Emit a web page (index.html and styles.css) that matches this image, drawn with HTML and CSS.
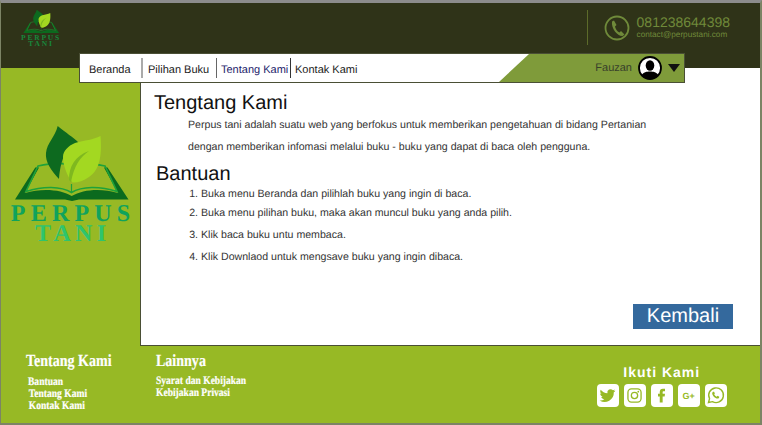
FILE: index.html
```html
<!DOCTYPE html>
<html lang="id">
<head>
<meta charset="utf-8">
<title>Perpus Tani</title>
<link rel="stylesheet" href="styles.css">
</head>
<body>
<svg class="defs" width="0" height="0" aria-hidden="true">
  <symbol id="mark" viewBox="0 14 140 78">
    <path fill="#0b6a1e" d="M14 89.5 34.3 57.5 38 57.5 24 83C40 78 60 79 70.700 86 82 79 101 78 117 83L103 57.500 106.500 57.500 127.500 89.500 78 89.500 71 91 64 89.500Z"/>
    <path fill="none" stroke="#1fa23a" stroke-width="1.600" d="M37 56 25 81.500C42 76 60 76 70.500 82.500 81 76 99 76 116 81.500L104 56C90 53 80 52 70.500 55 60 52 50 53 37 56Z"/>
    <path fill="none" stroke="#1fa23a" stroke-width="1.200" d="M70.500 74V82"/>
    <path fill="#0d6a1f" d="M56.700 16C65 23 72 27 78 33 66 37 60 46 58 69 50 60 44 52 45 43 46 33 54 27 56.700 16Z"/>
    <path fill="#a3d821" d="M99.500 26C101 45 99 60 88 67 82 71 76 73 71.500 72.500 66 66 62 55 62 47 62 41 67 36 74 33 84 30 92 30 99.500 26Z"/>
    <path fill="#7fb81f" d="M68 70C68 56 74 46 88 41 79 47 73 56 70 72Z"/>
  </symbol>
</svg>
<div class="frame">
  <header class="top">
    <div class="top-row">
      <div class="brand-small">
        <svg class="brand-small-mark"><use href="#mark"/></svg>
        <span class="brand-small-a">PERPUS</span>
        <span class="brand-small-b">TANI</span>
      </div>
      <div class="contact">
        <svg class="phone" viewBox="0 0 26 26">
          <circle cx="13" cy="13" r="11.500" fill="none" stroke="#6f8a3a" stroke-width="1.800"/>
          <path fill="#6f8a3a" d="M8 6.500 10 5.500 12.500 10 11 11.500C11.500 14 13 16.500 15.500 17.500L17 16 20.500 19.500 18.500 21C14 21.500 7 14 8 6.500Z"/>
        </svg>
        <div class="contact-text">
          <div class="contact-num">081238644398</div>
          <div class="contact-mail">contact@perpustani.com</div>
        </div>
      </div>
    </div>
    <nav class="nav">
      <a class="nav-item nav-first">Beranda</a>
      <a class="nav-item nav-second">Pilihan Buku</a>
      <a class="nav-item nav-active">Tentang Kami</a>
      <a class="nav-item nav-last">Kontak Kami</a>
      <div class="user">
        <span class="user-name">Fauzan</span>
        <svg class="avatar" viewBox="0 0 24 24">
          <circle cx="12" cy="12" r="11" fill="#fff" stroke="#000" stroke-width="1.800"/>
          <ellipse cx="12" cy="9.500" rx="4.300" ry="5.200"/>
          <path d="M3.500 19.500C5 16 9 15.500 12 15.500 15 15.500 19 16 20.500 19.500 18 22 15 23 12 23 9 23 6 22 3.500 19.500Z"/>
        </svg>
        <span class="caret"></span>
      </div>
    </nav>
  </header>
  <div class="middle">
    <aside class="side">
      <svg class="side-mark"><use href="#mark"/></svg>
      <div class="side-a">PERPUS</div>
      <div class="side-b">TANI</div>
    </aside>
    <main class="content">
      <h1 class="title">Tengtang Kami</h1>
      <p class="para">Perpus tani adalah suatu web yang berfokus untuk memberikan pengetahuan di bidang Pertanian</p>
      <p class="para">dengan memberikan infomasi melalui buku - buku yang dapat di baca oleh pengguna.</p>
      <h2 class="title title-b">Bantuan</h2>
      <ol class="steps">
        <li>Buka menu Beranda dan pilihlah buku yang ingin di baca.</li>
        <li>Buka menu pilihan buku, maka akan muncul buku yang anda pilih.</li>
        <li>Klik baca buku untu membaca.</li>
        <li>Klik Downlaod untuk mengsave buku yang ingin dibaca.</li>
      </ol>
      <div class="actions"><a class="back">Kembali</a></div>
    </main>
  </div>
  <footer class="foot">
    <div class="foot-col foot-col-a">
      <h3 class="foot-title">Tentang Kami</h3>
      <ul class="foot-list">
        <li>Bantuan</li>
        <li class="shift">Tentang Kami</li>
        <li class="shift">Kontak Kami</li>
      </ul>
    </div>
    <div class="foot-col foot-col-b">
      <h3 class="foot-title">Lainnya</h3>
      <ul class="foot-list foot-list-b">
        <li>Syarat dan Kebijakan</li>
        <li>Kebijakan Privasi</li>
      </ul>
    </div>
    <div class="follow">
      <div class="follow-title">Ikuti Kami</div>
      <div class="icons">
        <span class="ico"><svg viewBox="0 0 24 24"><path d="M21 6.500c-.7.3-1.400.5-2.100.6.8-.5 1.300-1.200 1.600-2-.7.4-1.500.7-2.300.9a3.700 3.700 0 0 0-6.300 3.400C8.800 9.200 6 7.700 4.200 5.400c-1 1.700-.5 3.800 1.100 4.900-.6 0-1.200-.2-1.700-.5 0 1.800 1.300 3.300 3 3.700-.5.100-1.100.2-1.700.1.500 1.500 1.900 2.500 3.500 2.600A7.500 7.500 0 0 1 3 17.700 10.500 10.500 0 0 0 19.200 8.400c.7-.5 1.300-1.100 1.800-1.900Z"/></svg></span>
        <span class="ico"><svg viewBox="0 0 24 24"><rect x="4.500" y="4.500" width="15" height="15" rx="4" fill="none" stroke="#97b925" stroke-width="1.500"/><circle cx="12" cy="12" r="3.600" fill="none" stroke="#97b925" stroke-width="1.500"/><circle cx="16.300" cy="7.700" r="1"/></svg></span>
        <span class="ico"><svg viewBox="0 0 24 24"><path d="M10 20v-7H8v-3h2V8c0-2.500 1.300-3.800 3.500-3.800H16v3h-1.500c-.9 0-1.200.4-1.200 1.200V10H16l-.4 3h-2.300v7Z"/></svg></span>
        <span class="ico ico-text">G+</span>
        <span class="ico"><svg viewBox="0 0 24 24"><path fill="none" stroke="#97b925" stroke-width="1.600" d="M4 20l1.200-4.400A8.400 8.400 0 1 1 8.500 19Z"/><path d="M9.200 7.700c-.9.600-1.200 1.800-.7 3.100.8 2 2.600 3.800 4.700 4.600 1.200.4 2.300 0 2.900-.9l.2-1.100-2-1-.9 1c-1.300-.5-2.300-1.500-2.900-2.800l.8-.9-.9-2.100Z"/></svg></span>
      </div>
    </div>
  </footer>
</div>
</body>
</html>
```
FILE: styles.css
```css
* { box-sizing: border-box; }
html, body { margin: 0; padding: 0; background: #fff; }
body { font-family: "Liberation Sans", Arial, sans-serif; color: #1a1a1a; text-rendering: geometricPrecision; }
.defs { position: absolute; }

.frame {
  width: 762px;
  height: 425px;
  display: flex;
  flex-direction: column;
  border-top: 3px solid #8c8c8c;
  border-left: 1px solid #7c8465;
  border-right: 2px solid #7c8465;
  border-bottom: 2px solid #7c8465;
  background: #fff;
}

.top {
  height: 65px;
  flex: none;
  background: #2f3318;
  position: relative;
  z-index: 2;
}
.top-row { height: 50px; display: flex; justify-content: space-between; }
.brand-small { width: 44px; margin: 6px 0 0 18px; display: flex; flex-direction: column; align-items: center; }
.brand-small-mark { width: 44px; height: 25px; flex: none; }
.brand-small-a, .brand-small-b {
  font-family: "Liberation Serif", serif;
  font-weight: 700;
  font-size: 7.500px;
  line-height: 6px;
  letter-spacing: 1.800px;
  color: #17883c;
}
.brand-small-a { margin-top: 1px; }
.contact { display: flex; align-items: flex-start; margin: 7px 30px 0 0; padding-left: 16px; height: 35px; border-left: 1px solid #5c6b2a; }
.phone { width: 26px; height: 26px; margin: 5px 7px 0 0; }
.contact-text { padding-top: 5px; }
.contact-num { font-size: 14px; line-height: 15px; color: #6f8a3a; }
.contact-mail { font-size: 8.200px; line-height: 10px; color: #6f8a3a; }

.nav {
  width: 606px;
  height: 30px;
  margin-left: 78px;
  display: flex;
  align-items: center;
  background: #fff;
  border: 1px solid #4a4f35;
  font-size: 11px;
  color: #222;
}
.nav-item { display: block; height: 20px; line-height: 24px; white-space: nowrap; }
.nav-first { padding-left: 9px; width: 61px; }
.nav-second { padding-left: 5px; width: 75px; border-left: 2px solid #aaa; }
.nav-active { padding-left: 4px; width: 74px; border-left: 1px solid #666; color: #23236b; }
.nav-last { padding-left: 4px; border-left: 1px solid #333; }
.user {
  margin-left: auto;
  width: 185px;
  height: 28px;
  display: flex;
  align-items: center;
  justify-content: flex-end;
  gap: 6px;
  padding-right: 4px;
  background: #7f9b3a;
  clip-path: polygon(30px 0, 100% 0, 100% 100%, 0 100%);
}
.user-name { font-size: 11px; color: #38402a; }
.avatar { width: 24px; height: 24px; }
.caret { width: 0; height: 0; border-left: 6px solid transparent; border-right: 6px solid transparent; border-top: 8px solid #111; }

.middle { flex: 1; min-height: 0; display: flex; }
.side {
  width: 140px;
  flex: none;
  background: #97b925;
  border-right: 1px solid #4a4f35;
  display: flex;
  flex-direction: column;
  align-items: center;
  padding-top: 56px;
  font-family: "Liberation Serif", serif;
  font-weight: 700;
}
.side-mark { width: 140px; height: 78px; flex: none; }
.side-a { font-size: 24px; line-height: 20px; letter-spacing: 5.200px; margin-right: -5.200px; color: #10a35c; margin-top: 2px; }
.side-b { font-size: 24px; line-height: 20px; letter-spacing: 4.300px; margin-right: -4.300px; color: #2fc46d; }

.content { flex: 1; min-width: 0; display: flex; flex-direction: column; padding: 23px 0 0 13px; border-bottom: 1px solid #4a4f35; }
.title { margin: 0; font-size: 20px; line-height: 24px; font-weight: 400; color: #111; }
.title + .para { margin-top: -1px; }
.title-b { margin: 4px 0 0 2px; }
.para { margin: 0 0 0 34px; font-size: 10.600px; line-height: 22px; color: #333; }
.steps { margin: 0 0 0 47px; padding: 0; font-size: 10.600px; color: #333; }
.steps li { line-height: 22px; }
.steps li:first-child { line-height: 16px; }
.actions { margin-top: auto; display: flex; justify-content: flex-end; padding: 0 27px 16px 0; }
.back { width: 100px; height: 25px; background: #34699d; color: #fff; font-size: 20px; line-height: 25px; text-align: center; }

.foot { flex: none; height: 77px; display: flex; background: #97b925; color: #fff; }
.foot-col { font-family: "Liberation Serif", serif; font-weight: 700; padding-top: 6px; }
.foot-col-a { margin-left: 25px; width: 130px; }
.foot-title { margin: 0; font-size: 17px; line-height: 17px; font-weight: 700; transform: scaleX(.825); transform-origin: left; white-space: nowrap; -webkit-text-stroke: .2px #fff; }
.foot-list { margin: 7px 0 0 2px; padding: 0; list-style: none; font-size: 11.500px; line-height: 12px; transform: scaleX(.83); transform-origin: left; white-space: nowrap; -webkit-text-stroke: .2px #fff; }
.foot-list-b { margin-left: 0; margin-top: 6px; }
.shift { margin-left: 1px; }
.follow { margin-left: auto; margin-right: 33px; padding-top: 18px; }
.follow-title { text-align: center; font-size: 14px; line-height: 16px; font-weight: 700; letter-spacing: 1px; color: #fff; }
.icons { display: flex; gap: 4.500px; margin-top: 4px; }
.ico { width: 22.500px; height: 23px; border-radius: 4px; background: #fff; color: #97b925; display: flex; align-items: center; justify-content: center; }
.ico svg { width: 21px; height: 21px; fill: #97b925; }
.ico-text { font-size: 9px; font-weight: 700; }
```
